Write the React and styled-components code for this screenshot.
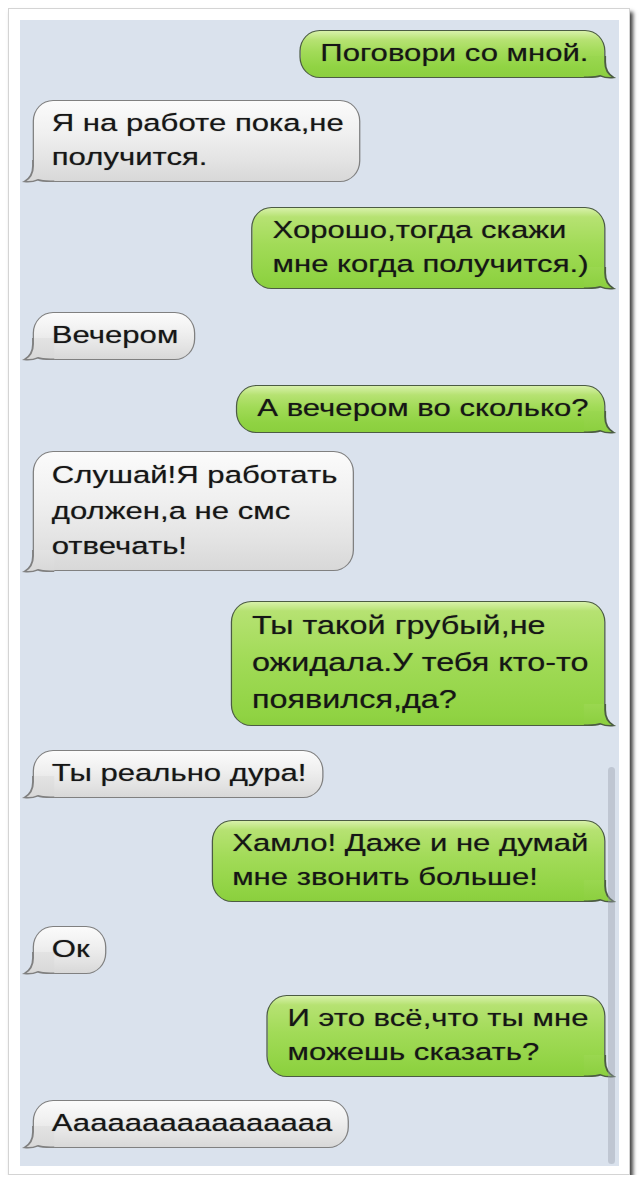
import React from "react"
import styled, { createGlobalStyle } from "styled-components"

// the phone screenshot is wider than the native font renders, so the
// whole thread is laid out narrow and stretched sideways
const STRETCH = 1.27
const SCREEN_W = 599

const GlobalStyle = createGlobalStyle`
    body {
        margin: 0;
        background: #fff;
    }
`

const Frame = styled.div`
    box-sizing: border-box;
    width: 622px;
    height: 1167px;
    margin: 8px 0 0 8px;
    padding: 11px 10px 8px 11px;
    background: #fff;
    border: 1px solid #d4d4d4;
    box-shadow: 3px 4px 4px rgba(0, 0, 0, 0.75);
`

const Screen = styled.div`
    position: relative;
    width: ${SCREEN_W}px;
    height: 1146px;
    overflow: hidden;
    background: #dae2ed;
`

const Thread = styled.div`
    box-sizing: border-box;
    width: ${SCREEN_W / STRETCH}px;
    padding: 10px 11px 0 10px;
    display: flex;
    flex-direction: column;
    transform: scaleX(${STRETCH});
    transform-origin: 0 0;
`

const skins = {
    me: {
        border: "#4c5c43",
        bg: "linear-gradient(180deg, #d8f1aa 0, #b6e272 9px, #a2db58 45%, #90d343 calc(100% - 10px), #8bcf3e 100%)",
        tailTop: "#9ad750",
        tailBottom: "#8bcf3e",
        pad: "5px 12px 6.5px 15.5px",
    },
    them: {
        border: "#808080",
        bg: "linear-gradient(180deg, #fbfbfb 0, #f0f0f0 40%, #e3e3e3 75%, #d8d8d8 100%)",
        tailTop: "#e3e3e3",
        tailBottom: "#d8d8d8",
        pad: "5px 12px 6.5px 14px",
    },
}

const Bubble = styled.div`
    position: relative;
    align-self: ${(p) => (p.$mine ? "flex-end" : "flex-start")};
    margin-top: ${(p) => p.$gap}px;
    padding: ${(p) => skins[p.$side].pad};
    border: 1.5px solid ${(p) => skins[p.$side].border};
    border-radius: 16px / 21px;
    background: ${(p) => skins[p.$side].bg};
    font-family: "Liberation Sans", Arial, sans-serif;
    font-size: ${(p) => p.$size}px;
    line-height: ${(p) => p.$lh}px;
    color: #161616;
    white-space: nowrap;
    text-shadow: 0 0 1px rgba(0, 0, 0, 0.45);
`

const Text = styled.span`
    position: relative;
    z-index: 1;
`

const TailSvg = styled.svg`
    position: absolute;
    bottom: -1.5px;
    width: 30px;
    height: 26px;
    overflow: visible;
    ${(p) => (p.$mine ? "right: -8px;" : "left: -8px; transform: scaleX(-1);")}
`

const Scrollbar = styled.div`
    position: absolute;
    top: 747px;
    bottom: 2px;
    right: 4px;
    width: 7px;
    border-radius: 4px;
    background: rgba(150, 157, 170, 0.4);
`

const TAIL_PATH =
    "M22.75 4 L22.75 10 C22.75 17 24.5 22 29.5 25.6 C25 26.2 21.5 25.2 19 23.8 C16.5 25 13 25.25 9 25.25 L6 25.25"

// hooked corner of the bubble, drawn for the right side and mirrored for the left
const Tail = ({ side }) => {
    const skin = skins[side]
    const id = `tail-${side}`
    return (
        <TailSvg $mine={side === "me"} viewBox="0 0 30 26">
            <defs>
                <linearGradient id={id} x1="0" y1="0" x2="0" y2="1">
                    <stop offset="0" stopColor={skin.tailTop} />
                    <stop offset="1" stopColor={skin.tailBottom} />
                </linearGradient>
            </defs>
            <path d={`M6 4 L${TAIL_PATH.slice(1)} Z`} fill={`url(#${id})`} />
            <path d={TAIL_PATH} fill="none" stroke={skin.border} strokeWidth="1.5" />
        </TailSvg>
    )
}

const messages = [
    { side: "me", gap: 0, lines: ["Поговори со мной."] },
    { side: "them", gap: 22.5, lines: ["Я на работе пока,не", "получится."] },
    { side: "me", gap: 25.5, lines: ["Хорошо,тогда скажи", "мне когда получится.)"] },
    { side: "them", gap: 23.5, lines: ["Вечером"] },
    { side: "me", gap: 25.5, lines: ["А вечером во сколько?"] },
    { side: "them", gap: 18.5, lh: 35.5, lines: ["Слушай!Я работать", "должен,а не смс", "отвечать!"] },
    { side: "me", gap: 30, size: 25.5, lh: 37, lines: ["Ты такой грубый,не", "ожидала.У тебя кто-то", "появился,да?"] },
    { side: "them", gap: 24.5, lines: ["Ты реально дура!"] },
    { side: "me", gap: 22.5, lines: ["Хамло! Даже и не думай", "мне звонить больше!"] },
    { side: "them", gap: 24.5, lines: ["Ок"] },
    { side: "me", gap: 21.5, lines: ["И это всё,что ты мне", "можешь сказать?"] },
    { side: "them", gap: 23.5, lines: ["А" + "а".repeat(15)] },
]

const App = () => {
    return (
        <>
            <GlobalStyle />
            <Frame>
                <Screen>
                    <Thread>
                        {messages.map((m, i) => (
                            <Bubble
                                key={i}
                                $side={m.side}
                                $mine={m.side === "me"}
                                $gap={m.gap}
                                $size={m.size || 24.5}
                                $lh={m.lh || 34}
                            >
                                <Tail side={m.side} />
                                <Text>
                                    {m.lines.map((line, j) => (
                                        <React.Fragment key={j}>
                                            {j > 0 && <br />}
                                            {line}
                                        </React.Fragment>
                                    ))}
                                </Text>
                            </Bubble>
                        ))}
                    </Thread>
                    <Scrollbar />
                </Screen>
            </Frame>
        </>
    )
}

export default App
